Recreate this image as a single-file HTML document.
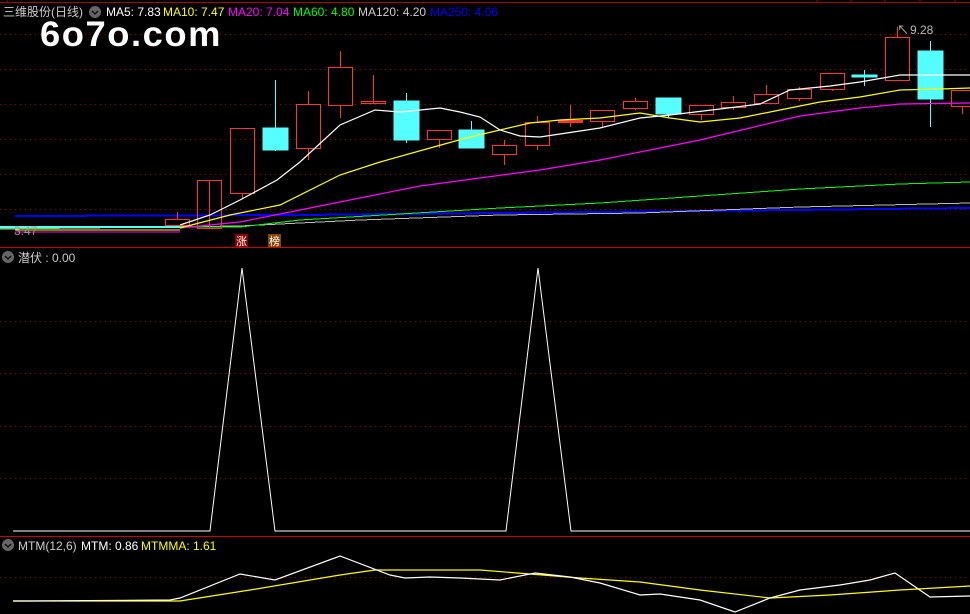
<!DOCTYPE html>
<html><head><meta charset="utf-8"><style>
html,body{margin:0;padding:0;background:#000;width:970px;height:614px;overflow:hidden}
svg{display:block}
text{font-family:"Liberation Sans","Noto Sans CJK SC",sans-serif}
</style></head><body>
<svg width="970" height="614" viewBox="0 0 970 614" xmlns="http://www.w3.org/2000/svg" shape-rendering="crispEdges">
<rect width="970" height="614" fill="#000"/>
<line x1="0" y1="2.5" x2="970" y2="2.5" stroke="#a00" />
<line x1="7" y1="0" x2="7" y2="3" stroke="#a00"/>
<g stroke="#a00"><line x1="817" y1="0" x2="817" y2="3"/><line x1="851" y1="0" x2="851" y2="3"/><line x1="885" y1="0" x2="885" y2="3"/><line x1="920" y1="0" x2="920" y2="3"/><line x1="955" y1="0" x2="955" y2="3"/></g>
<g stroke="#900" stroke-dasharray="1,4">
<line x1="0" y1="34.5" x2="970" y2="34.5"/><line x1="0" y1="69.5" x2="970" y2="69.5"/><line x1="0" y1="104.5" x2="970" y2="104.5"/><line x1="0" y1="139.5" x2="970" y2="139.5"/><line x1="0" y1="174.5" x2="970" y2="174.5"/><line x1="0" y1="209.5" x2="970" y2="209.5"/>
<line x1="0" y1="321.5" x2="970" y2="321.5"/><line x1="0" y1="373.5" x2="970" y2="373.5"/><line x1="0" y1="426.5" x2="970" y2="426.5"/><line x1="0" y1="478.5" x2="970" y2="478.5"/>
<line x1="0" y1="577.5" x2="970" y2="577.5"/>
</g>
<line x1="0" y1="247.5" x2="970" y2="247.5" stroke="#c00"/>
<line x1="0" y1="536.5" x2="970" y2="536.5" stroke="#c00"/>

<polyline fill="none" stroke="#00f" stroke-width="2" points="15,216 300,215 500,213 700,211 970,208"/>
<polyline fill="none" stroke="#bbb" points="0,229 240,226 360,220 500,215 640,213 800,207 970,203"/>
<polyline fill="none" stroke="#0f0" points="0,228 240,227 300,220 400,214 500,208 600,203 700,196 800,189 900,184 970,182"/>
<line x1="0" y1="227" x2="180" y2="227" stroke="#5ff" stroke-width="2"/>
<line x1="15" y1="230" x2="180" y2="230" stroke="#ff0"/>
<line x1="15" y1="232" x2="180" y2="232" stroke="#f0f"/>

<g stroke="#f33" fill="none">
<line x1="209.5" y1="180" x2="209.5" y2="228"/><rect x="197.5" y="180.5" width="24" height="48"/>
<line x1="242.5" y1="193" x2="242.5" y2="198"/><rect x="230.5" y="128.5" width="24" height="65"/>
<line x1="308.5" y1="91" x2="308.5" y2="160"/><rect x="296.5" y="104.5" width="24" height="44" fill="#000"/>
<line x1="340.5" y1="51" x2="340.5" y2="118"/><rect x="328.5" y="67.5" width="24" height="38" fill="#000"/>
<line x1="373.5" y1="75" x2="373.5" y2="103"/><rect x="361.5" y="101.5" width="24" height="2"/>
<line x1="439.5" y1="139" x2="439.5" y2="148"/><rect x="427.5" y="130.5" width="24" height="9" fill="#000"/>
<line x1="504.5" y1="140" x2="504.5" y2="165"/><rect x="492.5" y="145.5" width="24" height="9" fill="#000"/>
<line x1="537.5" y1="116" x2="537.5" y2="150"/><rect x="525.5" y="122.5" width="24" height="23" fill="#000"/>
<line x1="570.5" y1="105" x2="570.5" y2="127"/><rect x="558.5" y="120.5" width="24" height="2" fill="#f33"/>
<line x1="602.5" y1="110" x2="602.5" y2="127"/><rect x="590.5" y="110.5" width="24" height="11" fill="#000"/>
<line x1="635.5" y1="98" x2="635.5" y2="110"/><rect x="623.5" y="101.5" width="24" height="7" fill="#000"/>
<line x1="701.5" y1="105" x2="701.5" y2="120"/><rect x="689.5" y="105.5" width="24" height="9" fill="#000"/>
<line x1="733.5" y1="96" x2="733.5" y2="110"/><rect x="721.5" y="102.5" width="24" height="5" fill="#000"/>
<line x1="766.5" y1="85" x2="766.5" y2="103"/><rect x="754.5" y="94.5" width="24" height="9" fill="#000"/>
<line x1="799.5" y1="87" x2="799.5" y2="101"/><rect x="787.5" y="89.5" width="24" height="9" fill="#000"/>
<line x1="832.5" y1="73" x2="832.5" y2="91"/><rect x="820.5" y="73.5" width="24" height="16" fill="#000"/>
<line x1="897.5" y1="27" x2="897.5" y2="37"/><rect x="885.5" y="37.5" width="24" height="43" fill="#000"/>
<line x1="962.5" y1="106" x2="962.5" y2="114"/><rect x="951.5" y="90.5" width="24" height="16" fill="#000"/>
<rect x="165.5" y="219.5" width="24" height="6"/>
<line x1="177.5" y1="212" x2="177.5" y2="219"/>
</g>
<g fill="#5ff" stroke="#5ff">
<line x1="275.5" y1="80" x2="275.5" y2="151"/><rect x="263" y="128" width="25" height="22"/>
<line x1="406.5" y1="93" x2="406.5" y2="143"/><rect x="394" y="101" width="25" height="39"/>
<line x1="471.5" y1="121" x2="471.5" y2="148"/><rect x="459" y="130" width="25" height="18"/>
<line x1="668.5" y1="98" x2="668.5" y2="118"/><rect x="656" y="98" width="25" height="16"/>
<line x1="864.5" y1="70" x2="864.5" y2="86"/><rect x="852" y="75" width="25" height="2"/>
<line x1="930.5" y1="41" x2="930.5" y2="127"/><rect x="918" y="51" width="25" height="48"/>
</g>

<g fill="none" shape-rendering="auto" stroke-width="1.2">
<polyline stroke="#f0f" points="180,228 240,222 300,210 360,198 420,186 480,178 540,170 600,160 650,150 700,140 750,128 800,116 860,108 900,104 970,103"/>
<polyline stroke="#ff0" points="180,228 230,215 280,205 340,175 380,162 430,148 470,137 500,130 530,123 560,120 600,118 640,113 670,118 700,122 740,118 780,110 820,102 860,97 900,90 940,89 970,88"/>
<polyline stroke="#fff" points="180,225 210,215 240,200 277,180 300,162 340,125 375,110 400,112 420,110 440,108 460,112 480,117 500,130 520,136 540,137 560,134 600,128 640,118 670,115 720,109 760,104 790,90 810,88 830,86 860,82 900,75 920,75 970,75"/>
</g>

<text x="897" y="34" fill="#bbb" font-size="12">↖</text>
<text x="910" y="34" fill="#bbb" font-size="12">9.28</text>
<text x="14" y="235" fill="#999" font-size="12">3.47</text>

<rect x="235" y="234" width="13" height="13" fill="#800"/>
<text x="236" y="245" fill="#fff" font-size="11">涨</text>
<rect x="268" y="234" width="13" height="13" fill="#840"/>
<text x="269" y="245" fill="#fff" font-size="11">榜</text>

<text x="40" y="46" fill="#fff" font-size="35" font-weight="bold" letter-spacing="1.5" textLength="182" lengthAdjust="spacingAndGlyphs">6o7o.com</text>

<g font-size="12">
<text x="3" y="16" fill="#ccc">三维股份(日线)</text>
<circle cx="95" cy="12" r="6" fill="#666"/>
<path d="M92,11 l3,3 l3,-3" stroke="#111" fill="none" stroke-width="1.5" shape-rendering="auto"/>
<text x="106" y="16" fill="#fff">MA5: 7.83</text>
<text x="163" y="16" fill="#ff0">MA10: 7.47</text>
<text x="228" y="16" fill="#f0f">MA20: 7.04</text>
<text x="293" y="16" fill="#0f0">MA60: 4.80</text>
<text x="358" y="16" fill="#ccc">MA120: 4.20</text>
<text x="430" y="16" fill="#00f">MA250: 4.06</text>

<circle cx="8" cy="257" r="6" fill="#666"/>
<path d="M5,256 l3,3 l3,-3" stroke="#111" fill="none" stroke-width="1.5" shape-rendering="auto"/>
<text x="18" y="262" fill="#ccc">潜伏 : 0.00</text>

<circle cx="8" cy="545" r="6" fill="#666"/>
<path d="M5,544 l3,3 l3,-3" stroke="#111" fill="none" stroke-width="1.5" shape-rendering="auto"/>
<text x="18" y="550" fill="#ccc">MTM(12,6)</text>
<text x="81" y="550" fill="#fff">MTM: 0.86</text>
<text x="141" y="550" fill="#ff0">MTMMA: 1.61</text>
</g>

<polyline fill="none" stroke="#fff" shape-rendering="auto" points="13,531 210,531 242,268 275,531 506,531 538,268 571,531 970,531"/>

<g fill="none" shape-rendering="auto" stroke-width="1.2">
<polyline stroke="#ff0" points="13,601 180,601 250,590 340,575 375,570 480,570 530,574 580,578 640,582 700,590 770,598 830,595 900,590 970,586"/>
<polyline stroke="#fff" points="13,601 30,601 170,600 180,598 240,574 275,580 340,556 390,575 405,578 430,577 460,578 500,580 535,573 570,577 600,583 640,595 660,594 700,600 735,612 770,598 800,590 840,585 870,580 895,573 930,597 970,596"/>
</g>
</svg>
</body></html>
